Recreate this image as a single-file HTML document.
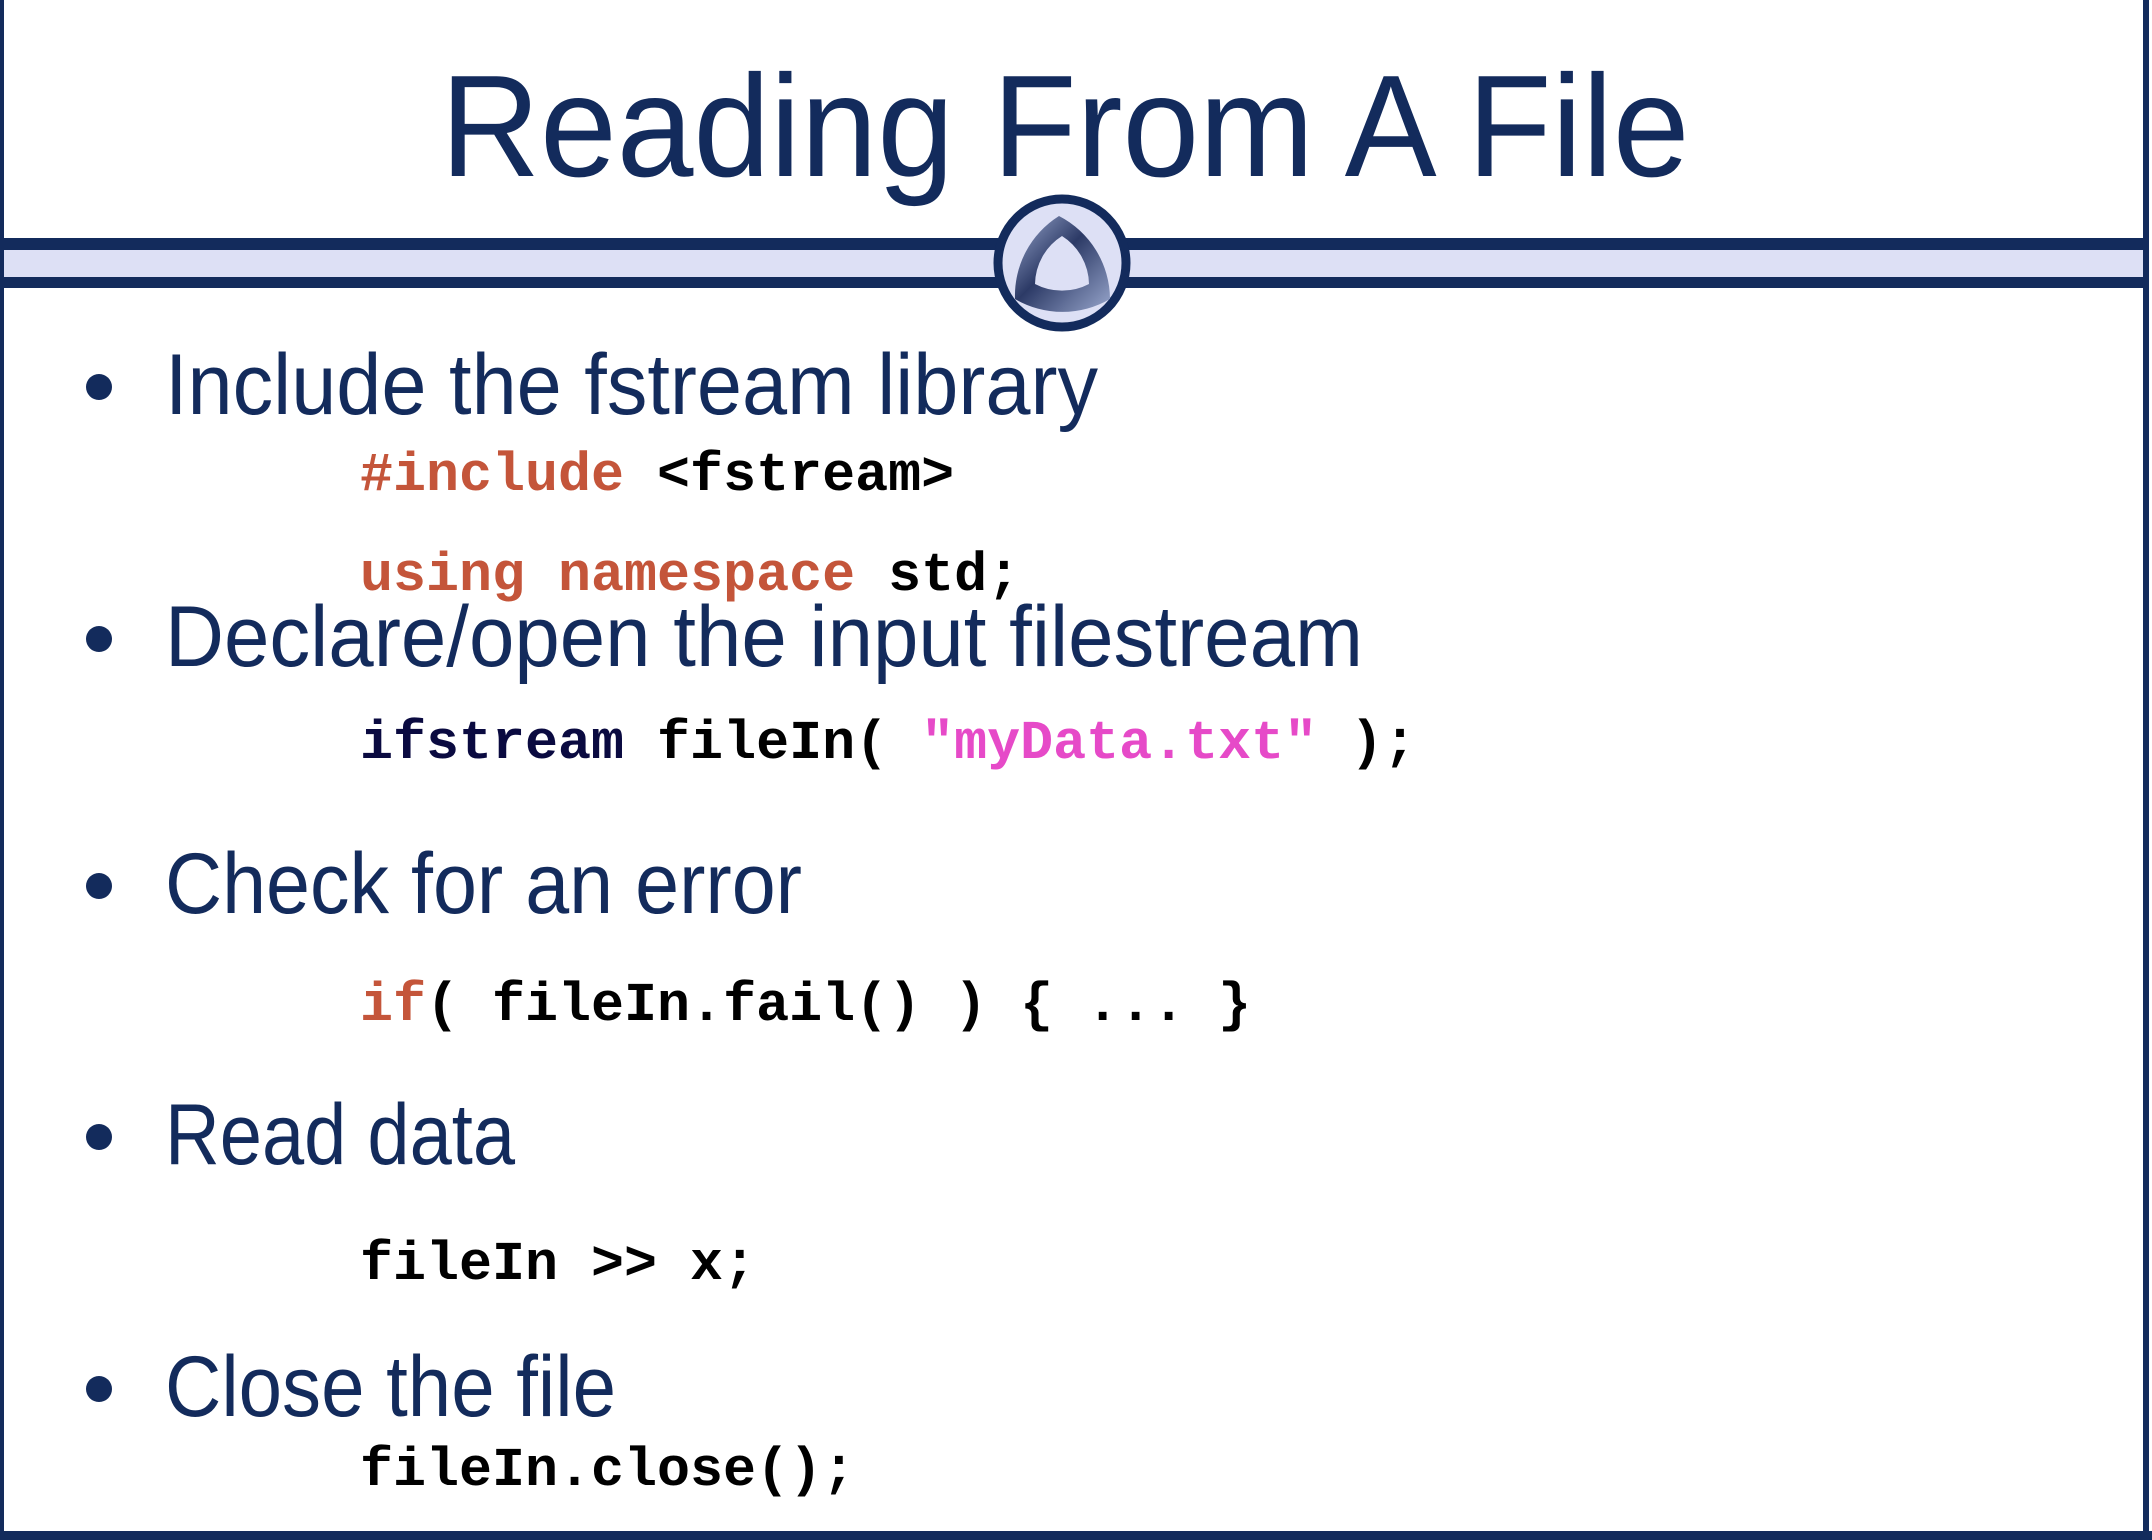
<!DOCTYPE html>
<html><head><meta charset="utf-8"><style>
html,body{margin:0;padding:0;background:#fff;width:2152px;height:1540px;overflow:hidden}
</style></head><body>
<svg width="2152" height="1540" viewBox="0 0 2152 1540" xmlns="http://www.w3.org/2000/svg">
<defs>
<linearGradient id="g" x1="0" y1="0" x2="1" y2="1">
<stop offset="0" stop-color="#98a6cc"/><stop offset="0.45" stop-color="#2c3a66"/><stop offset="1" stop-color="#98a6cc"/>
</linearGradient>
</defs>
<rect x="0" y="0" width="2152" height="1540" fill="#fff"/>
<rect x="0" y="238" width="2148" height="50" fill="#132b5c"/>
<rect x="0" y="250" width="2148" height="27" fill="#dde0f5"/>
<rect x="0" y="0" width="4" height="1540" fill="#132b5c"/>
<rect x="2143" y="0" width="6" height="1540" fill="#132b5c"/>
<rect x="0" y="1531" width="2152" height="9" fill="#132b5c"/>
<text x="1065" y="176" font-family="Liberation Sans, sans-serif" font-size="145" fill="#132b5c" text-anchor="middle" textLength="1249" lengthAdjust="spacingAndGlyphs">Reading From A File</text>
<circle cx="1062" cy="263" r="64" fill="#dde0f5" stroke="#132b5c" stroke-width="9"/>
<path fill="url(#g)" fill-rule="evenodd" d="M1059 216 A94 94 0 0 1 1110 299 A94 94 0 0 1 1015 299 A94 94 0 0 1 1059 216 Z M1062 236 A58 58 0 0 0 1035 284 A58 58 0 0 0 1089 284 A58 58 0 0 0 1062 236 Z"/>
<g fill="#132b5c">
<circle cx="99" cy="387" r="13"/><circle cx="99" cy="639" r="13"/><circle cx="99" cy="886" r="13"/><circle cx="99" cy="1137" r="13"/><circle cx="99" cy="1389" r="13"/>
</g>
<g font-family="Liberation Sans, sans-serif" font-size="86" fill="#132b5c">
<text x="165" y="414" textLength="933" lengthAdjust="spacingAndGlyphs">Include the fstream library</text>
<text x="165" y="666" textLength="1198" lengthAdjust="spacingAndGlyphs">Declare/open the input filestream</text>
<text x="165" y="913" textLength="637" lengthAdjust="spacingAndGlyphs">Check for an error</text>
<text x="165" y="1164" textLength="350" lengthAdjust="spacingAndGlyphs">Read data</text>
<text x="165" y="1416" textLength="451" lengthAdjust="spacingAndGlyphs">Close the file</text>
</g>
<g font-family="Liberation Mono, monospace" font-weight="bold" font-size="55" fill="#000" xml:space="preserve">
<text x="360" y="490"><tspan fill="#c4553a">#include</tspan> &lt;fstream&gt;</text>
<text x="360" y="590"><tspan fill="#c4553a">using namespace</tspan> std;</text>
<text x="360" y="758"><tspan fill="#0a0a40">ifstream</tspan> fileIn( <tspan fill="#e64ac8">"myData.txt"</tspan> );</text>
<text x="360" y="1020"><tspan fill="#c4553a">if</tspan>( fileIn.fail() ) { ... }</text>
<text x="360" y="1279">fileIn &gt;&gt; x;</text>
<text x="360" y="1485">fileIn.close();</text>
</g>
</svg>
</body></html>
